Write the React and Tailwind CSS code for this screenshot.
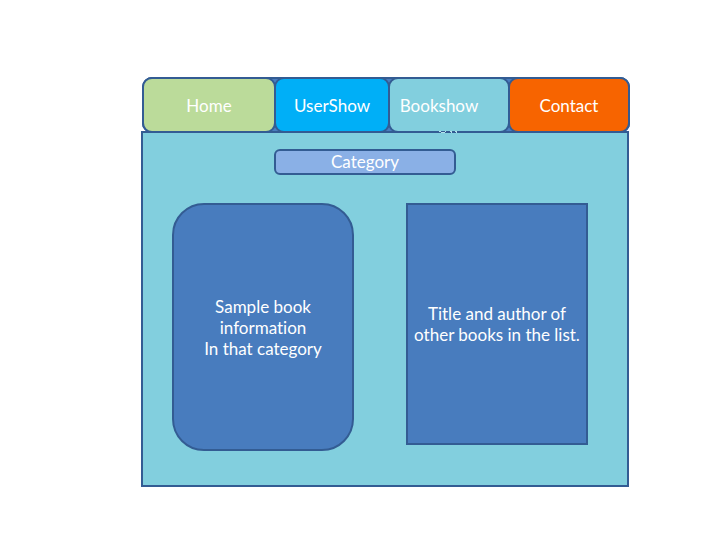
const tabs = [
  { label: "Home", style: "-mr-0.5 bg-[#bbdb9a]" },
  { label: "UserShow", style: "-mr-0.5 bg-[#00aff7]" },
  { label: "Bookshow", style: "-mr-0.5 bg-[#82cfde] pr-5" },
  { label: "Contact", style: "bg-[#f76400]" },
];

export default function App() {
  return (
    <div className="pt-[77px] pr-[87px] pb-[53px] pl-[141px] font-['Lato',sans-serif] text-[17px] leading-[21px] text-white [font-variant-ligatures:none]">
      <nav className="-mr-px ml-px grid h-14 grid-cols-[132fr_114fr_120fr_122fr] rounded-[10px] bg-[#4a7dbe] shadow-[inset_0_0_0_2px_#335c93]">
        {tabs.map((tab) => (
          <button
            key={tab.label}
            type="button"
            className={`rounded-[10px] border-2 border-[#335c93] ${tab.style}`}
          >
            {tab.label}
          </button>
        ))}
      </nav>
      <main className="relative -mt-0.5 border-2 border-[#335c93] bg-[#82cfde] px-[29px] pt-4 pb-[34px]">
        <svg
          aria-hidden="true"
          className="absolute -top-0.5 left-[296px] h-0.5 w-5"
          viewBox="0 0 20 2"
          fill="none"
          stroke="#b4e2eb"
        >
          <path d="M0 .5h2M2 1.5h4M6 .5h1M11 .5h2M12 1.5h1M16 .5h2M17 1.5h1" />
        </svg>
        <h1 className="ml-[102px] w-[182px] rounded-md border-2 border-[#335c93] bg-[#8ab0e6] text-center leading-[22px]">
          Category
        </h1>
        <div className="mt-7 flex items-start justify-between pr-[10px]">
          <section className="flex h-[248px] w-[182px] items-center justify-center rounded-[32px] border-2 border-[#335c93] bg-[#487cbe] text-center">
            <p>
              Sample book
              <br />
              information
              <br />
              In that category
            </p>
          </section>
          <section className="flex h-[242px] w-[182px] items-center justify-center border-2 border-[#335c93] bg-[#487cbe] text-center">
            <p>
              Title and author of
              <br />
              other books in the list.
            </p>
          </section>
        </div>
      </main>
    </div>
  );
}
